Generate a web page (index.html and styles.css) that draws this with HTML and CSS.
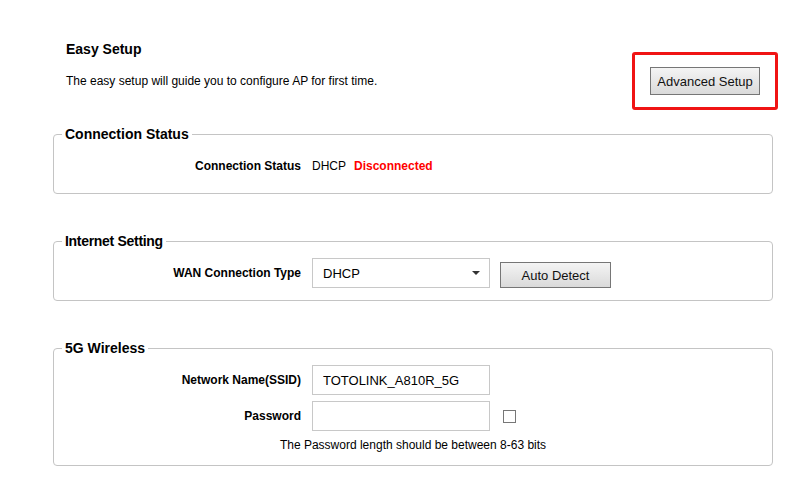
FILE: index.html
```html
<!DOCTYPE html>
<html lang="en">
<head>
    <meta charset="UTF-8">
    <meta name="viewport" content="width=device-width, initial-scale=1.0">
    <title>Easy Setup</title>
    <link rel="stylesheet" href="styles.css">
</head>
<body>
    <div class="page">
        <div class="intro">
            <div class="intro-text">
                <h1>Easy Setup</h1>
                <p>The easy setup will guide you to configure AP for first time.</p>
            </div>
            <div class="advanced-box">
                <button class="btn btn-advanced">Advanced Setup</button>
            </div>
        </div>

        <fieldset class="group">
            <legend>Connection Status</legend>
            <div class="row">
                <label>Connection Status</label>
                <div class="value">
                    <span>DHCP</span>
                    <span class="status-off">Disconnected</span>
                </div>
            </div>
        </fieldset>

        <fieldset class="group">
            <legend class="narrow">Internet Setting</legend>
            <div class="row">
                <label>WAN Connection Type</label>
                <div class="value">
                    <div class="select-wrap">
                        <select class="field">
                            <option>DHCP</option>
                            <option>Static IP</option>
                            <option>PPPoE</option>
                        </select>
                    </div>
                    <button class="btn btn-detect">Auto Detect</button>
                </div>
            </div>
        </fieldset>

        <fieldset class="group">
            <legend>5G Wireless</legend>
            <div class="row">
                <label>Network Name(SSID)</label>
                <div class="value">
                    <input class="field" type="text" value="TOTOLINK_A810R_5G">
                </div>
            </div>
            <div class="row">
                <label>Password</label>
                <div class="value">
                    <input class="field" type="password">
                    <input class="show-pass" type="checkbox">
                </div>
            </div>
            <p class="hint">The Password length should be between 8-63 bits</p>
        </fieldset>
    </div>
</body>
</html>
```

FILE: styles.css
```css
body {
    margin: 0;
    font-family: "Liberation Sans", Arial, sans-serif;
    font-size: 12px;
    color: #000;
    background: #fff;
}
.page {
    width: 720px;
    margin-left: 53px;
    padding-top: 41px;
}
.intro {
    display: flex;
    justify-content: space-between;
    align-items: flex-start;
    padding-left: 13px;
    margin-right: -5px;
}
.intro h1 {
    margin: 0;
    font-size: 14px;
    line-height: 16px;
    font-weight: bold;
}
.intro p {
    margin: 17px 0 0;
    line-height: 14px;
}
.advanced-box {
    margin-top: 11px;
    padding: 12px 15px;
    border: 3px solid #f01414;
    border-radius: 3px;
}
.btn {
    font-family: "Liberation Sans", Arial, sans-serif;
    font-size: 13px;
    color: #111;
    background: linear-gradient(#f4f4f4, #dadada);
    border: 1px solid #767676;
    padding: 0;
    cursor: pointer;
}
.btn-advanced {
    display: block;
    width: 110px;
    height: 28px;
}
.group {
    margin: 16px 0 0;
    padding: 9px 8px 12px;
    border: 1px solid #c4c4c4;
    border-radius: 4px;
}
.group + .group {
    margin-top: 39px;
}
.group legend {
    padding: 0 3px;
    font-size: 14px;
    line-height: 16px;
    font-weight: bold;
}
.group legend.narrow {
    letter-spacing: -0.3px;
}
.row {
    display: grid;
    grid-template-columns: 239px 1fr;
    column-gap: 11px;
    align-items: center;
    height: 30px;
}
.row + .row {
    margin-top: 6px;
}
.row label {
    text-align: right;
    font-weight: bold;
}
.value {
    display: flex;
    align-items: center;
    gap: 8px;
}
.status-off {
    color: #f00;
    font-weight: bold;
}
.field {
    box-sizing: border-box;
    width: 178px;
    height: 30px;
    margin: 0;
    padding: 0 10px;
    border: 1px solid #c8c8c8;
    border-radius: 0;
    background: #fff;
    font-family: "Liberation Sans", Arial, sans-serif;
    font-size: 13px;
    color: #000;
    outline: none;
}
.select-wrap {
    position: relative;
}
.select-wrap select {
    display: block;
    -webkit-appearance: none;
    appearance: none;
}
.select-wrap::after {
    content: "";
    position: absolute;
    right: 10px;
    top: 13px;
    border-left: 4px solid transparent;
    border-right: 4px solid transparent;
    border-top: 4px solid #333;
    pointer-events: none;
}
.btn-detect {
    align-self: flex-end;
    width: 111px;
    height: 26px;
    margin-left: 2px;
}
.show-pass {
    -webkit-appearance: none;
    appearance: none;
    width: 13px;
    height: 13px;
    margin: 0 0 0 5px;
    border: 1px solid #777;
    background: #fff;
}
.hint {
    margin: 6px 0 0;
    line-height: 16px;
    text-align: center;
}
```
